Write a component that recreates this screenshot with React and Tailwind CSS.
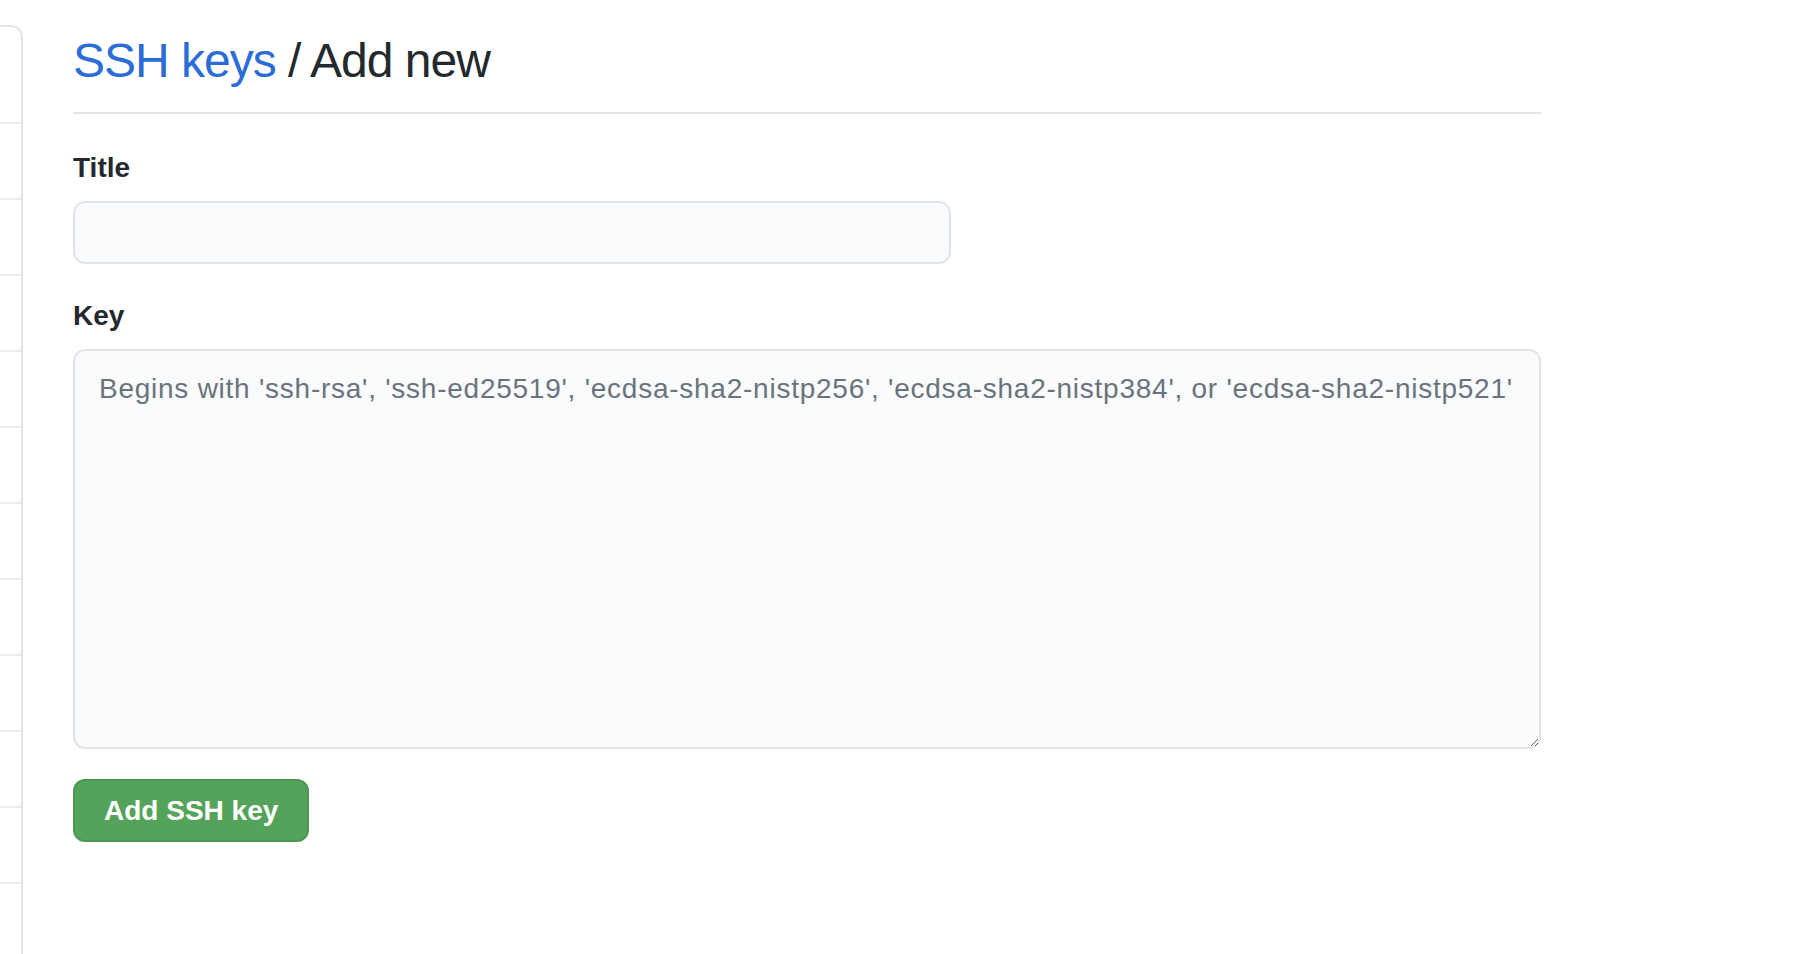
export default function App() {
  const sideItems = [...Array(11)];
  return (
    <div className="flex min-h-[954px] bg-white text-[#24292e]" style={{ fontFamily: '"Liberation Sans", Arial, sans-serif' }}>
      <div className="w-[23px] shrink-0 pt-[25px]">
        <div className="h-full border-t-2 border-r-2 border-[#e1e4e8] rounded-tr-[12px]">
          <div className="h-[97px] border-b-2 border-[#eaecef]" />
          {sideItems.map((_, i) => (
            <div key={i} className="h-[76px] border-b-2 border-[#eaecef]" />
          ))}
        </div>
      </div>

      <div className="ml-[50px] w-[1468px] pt-[25px]">
        <div className="border-b-2 border-[#e1e4e8] pb-[15px] mb-[33px]">
          <h1 className="text-[48px] leading-[72px] font-normal tracking-[-1px]">
            <a href="#" className="text-[#2c6cd6]">SSH keys</a> / Add new
          </h1>
        </div>

        <form onSubmit={(e) => e.preventDefault()}>
          <label className="block text-[28px] leading-[42px] font-bold mb-[12px]">Title</label>
          <input type="text" className="block w-[878px] h-[63px] px-[24px] text-[28px] bg-[#fafbfc] border-2 border-[#e1e4e8] rounded-[12px] outline-none" />

          <label className="block text-[28px] leading-[42px] font-bold mt-[31px] mb-[12px]">Key</label>
          <textarea
            className="block w-full h-[400px] pl-[24px] pr-[4px] pt-[18px] text-[28px] leading-[40px] tracking-[0.75px] bg-[#fafbfc] border-2 border-[#e1e4e8] rounded-[12px] outline-none placeholder:text-[#6a737d]"
            placeholder="Begins with 'ssh-rsa', 'ssh-ed25519', 'ecdsa-sha2-nistp256', 'ecdsa-sha2-nistp384', or 'ecdsa-sha2-nistp521'"
          />

          <button type="submit" className="mt-[30px] h-[63px] px-[29px] rounded-[12px] bg-[#55a35a] border-2 border-[#4c9751] text-white text-[28px] font-bold">
            Add SSH key
          </button>
        </form>
      </div>
    </div>
  );
}
